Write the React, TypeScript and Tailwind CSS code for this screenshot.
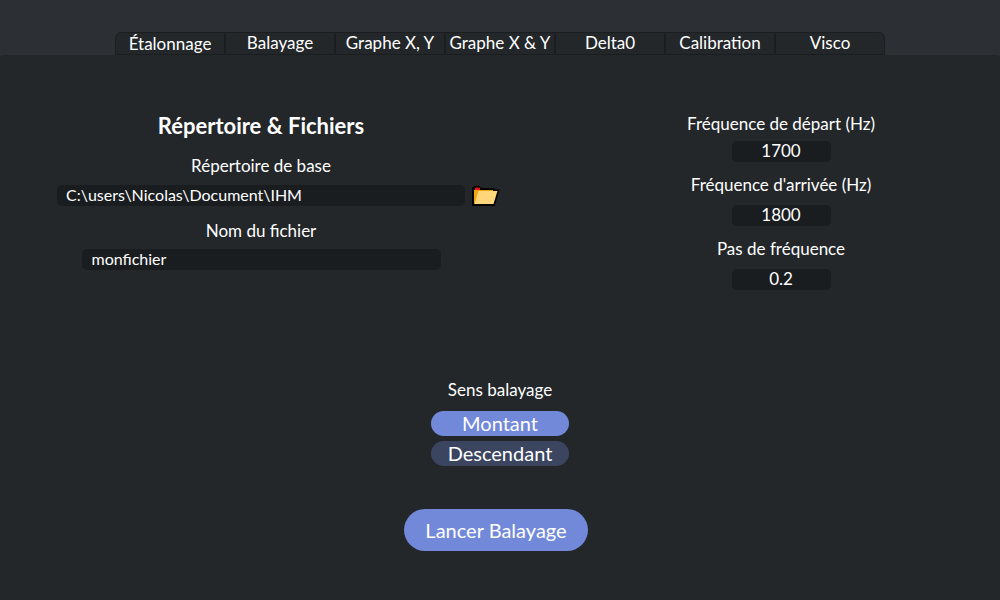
import { useState } from "react";

const tabs = ["Étalonnage", "Balayage", "Graphe X, Y", "Graphe X & Y", "Delta0", "Calibration", "Visco"];

const frequencies = [
  { id: "depart", label: "Fréquence de départ (Hz)", value: "1700", gap: "mt-[7px]" },
  { id: "arrivee", label: "Fréquence d'arrivée (Hz)", value: "1800", gap: "mt-[10px]" },
  { id: "pas", label: "Pas de fréquence", value: "0.2", gap: "mt-[10px]" },
];

function FolderIcon() {
  return (
    <svg width="28" height="22" viewBox="0 0 28 22" aria-hidden="true">
      <path d="M0 21V2H2V1H8V2H9V3H22.5V4.5H27.5L23 20V21Z" fill="#000" />
      <path d="M2 18.5V5H21V7H7L3.5 19Z" fill="#f2a60c" />
      <path d="M3 5V3L4 2.5H7L8 3V5Z" fill="#e81123" />
      <path d="M2.5 19L6.5 6H25.5L21.5 19Z" fill="#ffd679" />
    </svg>
  );
}

export default function App() {
  const [active, setActive] = useState(0);
  const [direction, setDirection] = useState("Montant");

  return (
    <div className="flex min-h-screen flex-col bg-[#2c2f33] font-['Lato','Open_Sans',sans-serif] text-[17px] leading-5 text-white">
      <nav role="tablist" className="mx-auto mt-8 flex w-[77%] overflow-hidden rounded-t-md bg-[#23272a]">
        {tabs.map((tab, i) => (
          <button
            key={tab}
            role="tab"
            aria-selected={i === active}
            onClick={() => setActive(i)}
            className="h-[23px] min-w-0 flex-1 whitespace-nowrap border border-[#1b1e21] pb-[2px] first:rounded-tl-md last:rounded-tr-md aria-selected:pb-0"
          >
            {tab}
          </button>
        ))}
      </nav>

      <main className="flex flex-1 flex-col rounded-t bg-[#23272a]">
        <div className="grid grid-cols-[522fr_438fr] gap-10 pt-[58px]">
          <section className="flex flex-col items-center">
            <h1 className="text-[22px] font-bold leading-[26px]">Répertoire &amp; Fichiers</h1>
            <label htmlFor="base" className="mt-[17px]">Répertoire de base</label>
            <div className="mt-[9px] grid w-full grid-cols-[1fr_auto_1fr] items-center">
              <input
                id="base"
                defaultValue="C:\users\Nicolas\Document\IHM"
                className="col-start-2 h-[21px] w-[408px] rounded-[5px] bg-[#1a1d20] px-[9px] pb-[2px] text-base outline-none"
              />
              <button aria-label="Parcourir" className="-my-1 ml-[7px]">
                <FolderIcon />
              </button>
            </div>
            <label htmlFor="fichier" className="mt-[15px]">Nom du fichier</label>
            <input
              id="fichier"
              defaultValue="monfichier"
              className="mt-2 h-[21px] w-[359px] rounded-[5px] bg-[#1a1d20] px-[10px] pb-[2px] text-base outline-none"
            />
          </section>

          <section className="flex flex-col items-center gap-[13px] pt-px">
            {frequencies.map((f) => (
              <div key={f.id} className="flex flex-col items-center">
                <label htmlFor={f.id}>{f.label}</label>
                <input
                  id={f.id}
                  defaultValue={f.value}
                  className={`${f.gap} h-[21px] w-[99px] rounded-[5px] bg-[#1a1d20] pb-[2px] text-center outline-none`}
                />
              </div>
            ))}
          </section>
        </div>

        <section className="mt-[90px] flex flex-col items-center">
          <h2 id="sens">Sens balayage</h2>
          <div role="group" aria-labelledby="sens" className="mt-[11px] flex flex-col gap-[5px] text-xl leading-6">
            {["Montant", "Descendant"].map((d) => (
              <button
                key={d}
                aria-pressed={d === direction}
                onClick={() => setDirection(d)}
                className="h-[25px] w-[138px] rounded-full bg-[#3c4560] pb-[2px] aria-pressed:bg-[#7289da]"
              >
                {d}
              </button>
            ))}
          </div>
        </section>
        <div className="mt-[43px] flex justify-center pr-2">
          <button className="h-[42px] w-[184px] rounded-full bg-[#7289da] text-xl">Lancer Balayage</button>
        </div>
      </main>
    </div>
  );
}
